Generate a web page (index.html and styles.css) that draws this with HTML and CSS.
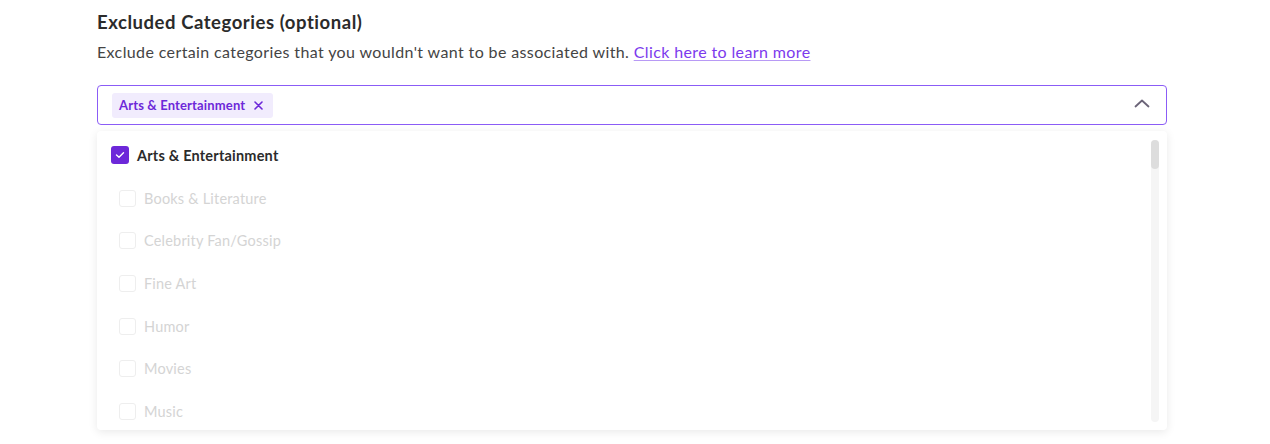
FILE: index.html
```html
<!DOCTYPE html>
<html lang="en">
<head>
<meta charset="utf-8">
<title>Excluded Categories</title>
<link rel="stylesheet" href="styles.css">
</head>
<body>
<section class="field">
  <h2 class="title">Excluded Categories (optional)</h2>
  <p class="desc">Exclude certain categories that you wouldn't want to be associated with. <a href="#" class="link">Click here to learn more</a></p>
  <div class="select">
    <span class="chip">Arts &amp; Entertainment <span class="chip-x">
      <svg width="9" height="9" viewBox="0 0 9 9"><path d="M1 1L8 8M8 1L1 8" stroke="#6d28d9" stroke-width="1.6" stroke-linecap="round"/></svg>
    </span></span>
    <span class="chev"><svg width="16" height="9" viewBox="0 0 16 9"><path d="M1.5 7.5L8 1.5L14.5 7.5" fill="none" stroke="#6b6478" stroke-width="1.8" stroke-linecap="round" stroke-linejoin="round"/></svg></span>
  </div>
  <div class="menu">
    <ul class="options">
      <li class="opt checked"><span class="box"><svg width="10" height="8" viewBox="0 0 10 8"><path d="M1.5 4L4 6.3L8.5 1.8" fill="none" stroke="#fff" stroke-width="1.4" stroke-linecap="round" stroke-linejoin="round"/></svg></span>Arts &amp; Entertainment</li>
      <li class="opt disabled"><span class="box"></span>Books &amp; Literature</li>
      <li class="opt disabled"><span class="box"></span>Celebrity Fan/Gossip</li>
      <li class="opt disabled"><span class="box"></span>Fine Art</li>
      <li class="opt disabled"><span class="box"></span>Humor</li>
      <li class="opt disabled"><span class="box"></span>Movies</li>
      <li class="opt disabled"><span class="box"></span>Music</li>
    </ul>
    <div class="scroll"><div class="thumb"></div></div>
  </div>
</section>
</body>
</html>
```
FILE: styles.css
```css
html, body {
  margin: 0;
  padding: 0;
  background: #fff;
}
body {
  font-family: Lato, "Open Sans", sans-serif;
  color: #333;
  min-height: 100vh;
}
.field {
  width: 1070px;
  margin-left: 97px;
  padding-top: 10px;
}
.title {
  margin: 0;
  font-size: 18.5px;
  line-height: 24px;
  font-weight: 700;
  color: #2b2b2b;
  letter-spacing: 0.55px;
}
.desc {
  margin: 6px 0 0;
  font-size: 16px;
  line-height: 24px;
  color: #444;
  letter-spacing: 0.38px;
}
.link {
  color: #7c3aed;
  text-decoration: underline;
  text-decoration-color: #b89af5;
  text-underline-offset: 2px;
}
.select {
  margin-top: 21px;
  height: 40px;
  box-sizing: border-box;
  border: 1px solid #8b5cf6;
  border-radius: 4px;
  display: flex;
  align-items: center;
  justify-content: space-between;
  padding: 0 16px 0 14px;
}
.chip {
  display: inline-flex;
  align-items: center;
  height: 25px;
  padding: 0 10px 0 7px;
  background: #f1ecfd;
  border-radius: 3px;
  color: #6d28d9;
  font-size: 13px;
  font-weight: 700;
  letter-spacing: 0.15px;
}
.chip-x {
  display: inline-flex;
  margin-left: 9px;
}
.chev {
  display: inline-flex;
  margin-top: -4px;
}
.menu {
  margin-top: 6px;
  height: 299px;
  background: #fff;
  border-radius: 4px;
  box-shadow: 0 2px 10px rgba(0,0,0,0.09);
  display: flex;
  overflow: hidden;
}
.options {
  list-style: none;
  margin: 0;
  padding: 3px 0 0;
  flex: 1;
}
.opt {
  height: 42.7px;
  display: flex;
  align-items: center;
  font-size: 14.5px;
  letter-spacing: 0.2px;
}
.box {
  width: 18px;
  height: 18px;
  box-sizing: border-box;
  border-radius: 3px;
  margin-right: 8px;
  display: inline-flex;
  align-items: center;
  justify-content: center;
}
.checked {
  padding-left: 14px;
  font-weight: 700;
  color: #2b2b2b;
  font-size: 14.5px;
}
.checked .box {
  background: #6d28d9;
}
.disabled {
  padding-left: 22px;
  color: #d4d4d4;
}
.disabled .box {
  width: 17px;
  height: 17px;
  border: 1px solid #eeeeee;
}
.scroll {
  width: 8px;
  margin: 9px 8px 8px 0;
  background: #f5f5f5;
  border-radius: 4px;
}
.thumb {
  height: 29px;
  background: #dddddd;
  border-radius: 4px;
}
```
